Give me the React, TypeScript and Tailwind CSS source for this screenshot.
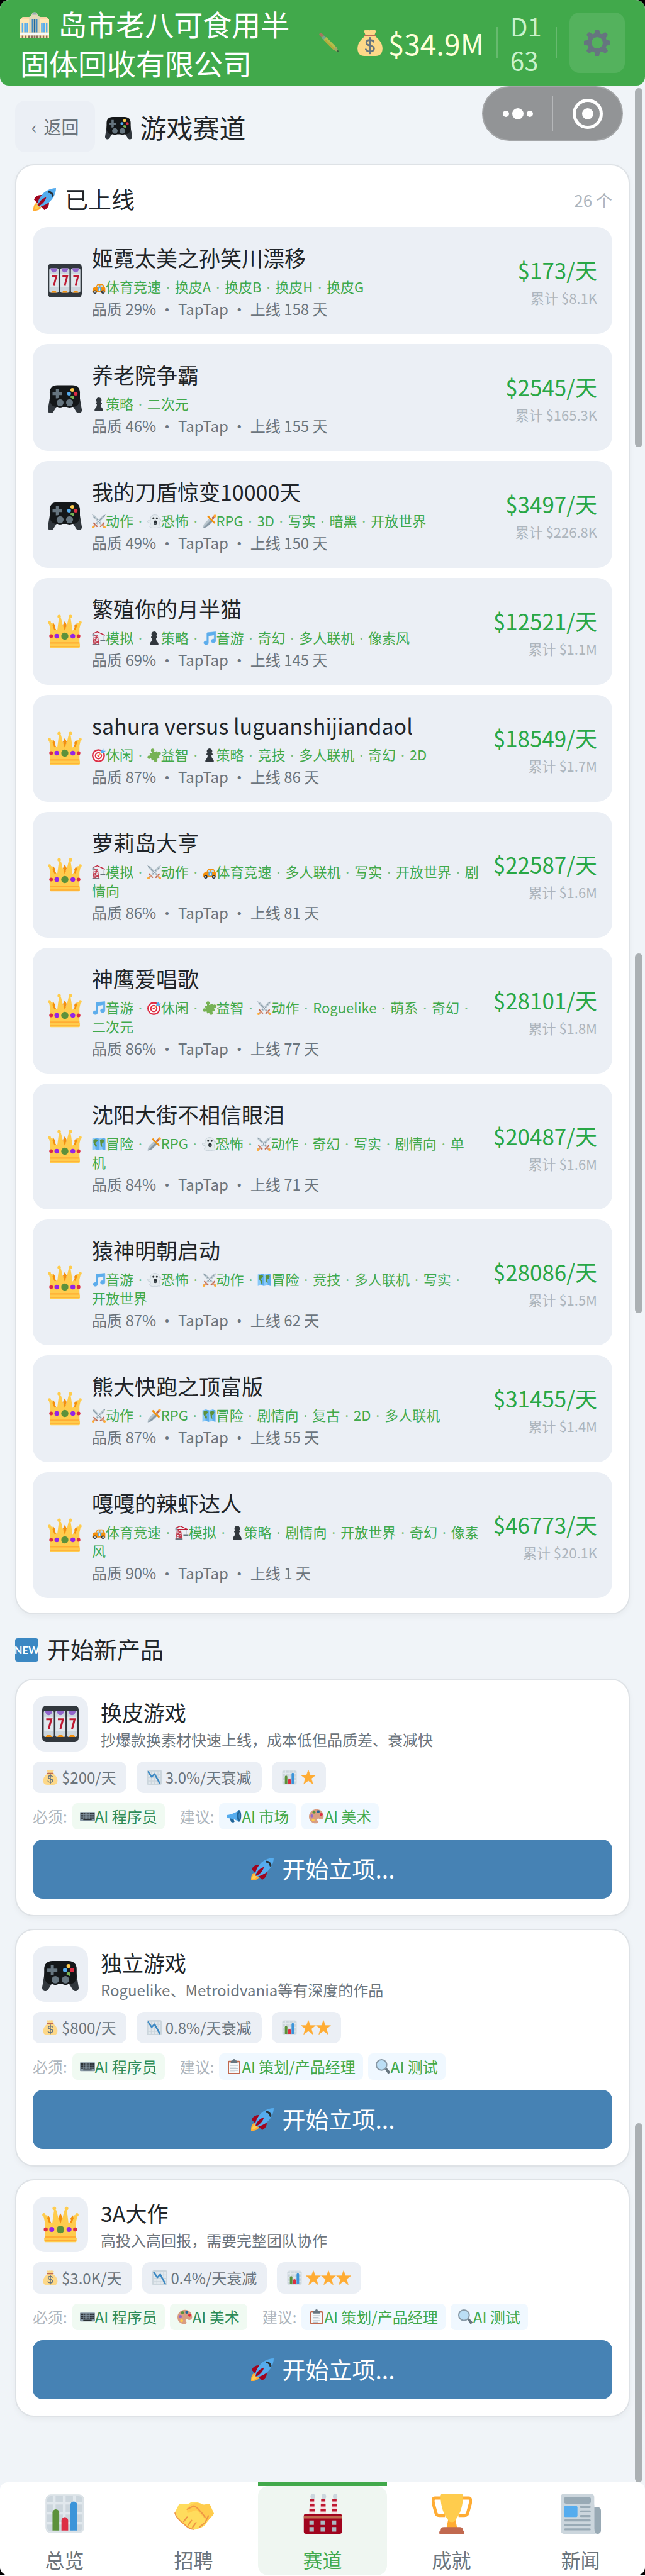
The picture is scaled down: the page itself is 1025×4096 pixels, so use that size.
import { Fragment } from 'react';
import type { ReactNode } from 'react';
import clsx from 'clsx';

/* ---------- icons ---------- */

const icons: Record<string, ReactNode> = {
  slot: (
    <>
      <rect width="36" height="36" rx="4" fill="#31373d" />
      <rect x="1.500" y="5" width="10" height="26" rx="2" fill="#ccd6dd" />
      <rect x="13" y="5" width="10" height="26" rx="2" fill="#ccd6dd" />
      <rect x="24.500" y="5" width="10" height="26" rx="2" fill="#ccd6dd" />
      <path d="M2 11h9v14H2zM13.500 11h9v14h-9zM25 11h9v14h-9z" fill="#e1e8ed" />
      <path d="M3 5h7c0 2.500-1.500 4.500-3.500 4.500S3 7.500 3 5zM14.500 5h7c0 2.500-1.500 4.500-3.500 4.500s-3.500-2-3.500-4.500zM26 5h7c0 2.500-1.500 4.500-3.500 4.500S26 7.500 26 5z" fill="#9266cc" />
      <path d="M3.500 31c.5-3 5.500-3 6 0zM15 31c.5-3 5.500-3 6 0zM26.500 31c.5-3 5.500-3 6 0z" fill="#f4900c" />
      <path d="M4 13.500h5L6.500 23M15.500 13.500h5L18 23M27 13.500h5L29.500 23" fill="none" stroke="#be1931" strokeWidth="1.900" />
    </>
  ),
  gamepad: (
    <>
      <path d="M3 13 0 31c-.3 4 4 5 6 2l5-8h14l5 8c2 3 6.300 2 6-2l-3-18z" fill="#31373d" />
      <path d="M10 5h16c5 0 8 3 8 8v7c0 5-3 8-8 8H10c-5 0-8-3-8-8v-7c0-5 3-8 8-8z" fill="#141719" />
      <path d="M8.500 9h3v3.500H15v3h-3.500V19h-3v-3.500H5v-3h3.500z" fill="#66757f" />
      <circle cx="26" cy="10" r="2" fill="#ffcc4d" />
      <circle cx="29.500" cy="14" r="2" fill="#dd2e44" />
      <circle cx="22.500" cy="14" r="2" fill="#55acee" />
      <circle cx="26" cy="18" r="2" fill="#77b255" />
      <circle cx="13" cy="23.500" r="5.200" fill="#141719" />
      <circle cx="23" cy="23.500" r="5.200" fill="#141719" />
      <circle cx="13" cy="23.500" r="3.700" fill="#66757f" />
      <circle cx="23" cy="23.500" r="3.700" fill="#66757f" />
    </>
  ),
  crown: (
    <>
      <path d="m3 22 2-12 5 8 3-12 5 10 5-10 3 12 5-8 2 12z" fill="#f4900c" />
      <path d="M2.500 32V15L1 8.500 5 9l2 7 3 1 1-8 1-6 2 1 2 8 2 5 2-5 2-8 2-1 1 6 1 8 3-1 2-7 4-.5-1.500 6.500v17z" fill="#ffcc4d" />
      <circle cx="12" cy="2.200" r="1.800" fill="#ffcc4d" />
      <circle cx="24" cy="2.200" r="1.800" fill="#ffcc4d" />
      <circle cx="1.700" cy="8.500" r="1.600" fill="#ffcc4d" />
      <circle cx="34.300" cy="8.500" r="1.600" fill="#ffcc4d" />
      <path d="m6 9 2 3-1 5-2-5zM18 7l2 4-2 6-2-6zM30 9l1 3-2 5-1-5z" fill="#f4900c" />
      <rect x="2" y="30.500" width="32" height="5" rx="1.300" fill="#ffcc4d" />
      <path d="M2.500 29.500h31v1.500h-31zM2.500 33.500h31v1h-31z" fill="#ffac33" />
      <circle cx="18" cy="23" r="3.800" fill="#5c913b" />
      <circle cx="9.500" cy="23" r="2.500" fill="#9224e6" />
      <circle cx="26.500" cy="23" r="2.500" fill="#9224e6" />
      <circle cx="3.500" cy="23" r="2" fill="#dd2e44" />
      <circle cx="32.500" cy="23" r="2" fill="#dd2e44" />
    </>
  ),
  rocket: (
    <>
      <path d="M1 35c-.5-5 1-11 5-12l7 7c-1 4-7 5.500-12 5z" fill="#ffac33" />
      <path d="M2.500 33.500C2.500 30 4 26 7 25.500l3 3c-1 3-4 5-7.500 5z" fill="#ffcc4d" />
      <path d="M2 18c2-5 7-8 13-7l-7 13zM18 34c5-2 8-7 7-13l-13 7z" fill="#a0041e" />
      <path d="M36 0c-9 0-18 5-23 12-3 4-5 9-6 14l3 3c5-1 10-3 14-6C31 18 36 9 36 0z" fill="#55acee" />
      <path d="M8 28c0-5 5-11 13-14-2 7-8 13-13 14z" fill="#a0041e" />
      <path d="M25 6c3 0 6 3 6 6" fill="none" stroke="#292f33" strokeWidth="3" strokeLinecap="round" />
    </>
  ),
  building: (
    <>
      <path d="M0 34V11l3-3h9l2 3v23zM22 34V11l2-3h9l3 3v23z" fill="#ffe8b6" />
      <path d="M0 11l3-3h9l2 3zM22 11l2-3h9l3 3z" fill="#ffd6a8" />
      <path d="M11 34V8l3-2a4 4 0 0 1 8 0l3 2v26z" fill="#e1d9b9" />
      <path d="M15 5a3 3 0 0 1 6 0z" fill="#99aab5" />
      <path d="M2 15h2v12H2zM5 15h2v12H5zM8 15h2v12H8zM26 15h2v12h-2zM29 15h2v12h-2zM32 15h2v12h-2z" fill="#55acee" />
      <path d="M14.500 11h2v16h-2zM19.500 11h2v16h-2z" fill="#3b88c3" />
      <path d="M17 11h2v16h-2z" fill="#226699" />
      <path d="M0 28h36v2H0z" fill="#f5f8fa" />
      <path d="M2 31h2v3H2zM6 31h2v3H6zM10 31h2v3h-2zM14 31h2v3h-2zM17 31h2v3h-2zM20 31h2v3h-2zM24 31h2v3h-2zM28 31h2v3h-2zM32 31h2v3h-2z" fill="#8a6a5c" />
    </>
  ),
  pencil: (
    <>
      <path d="M0 4c0-2 2-4 4-4l5 5-4 4z" fill="#ea596e" />
      <path d="m4 9 5-4 4 4-4 5z" fill="#99aab5" />
      <path d="m8 13 5-5 18 18-5 5z" fill="#ffcc4d" />
      <path d="m10 15 2-3 16 16-2 3z" fill="#ffac33" />
      <path d="m25 30 6-5 5 11z" fill="#e1a679" />
      <path d="m31 33 3-2 2 5z" fill="#292f33" />
    </>
  ),
  money: (
    <>
      <path d="M11 9C5 14 1 19 1 26c0 7 4 10 9 10h16c5 0 9-3 9-10 0-7-4-12-10-17z" fill="#fdd888" />
      <path d="M12 8 9.500 1.500C12 0 14 2 16 .5 18 2 20-.5 22 1c2-1 3 0 4.500.5L24 8z" fill="#fdd888" />
      <rect x="10" y="7" width="16" height="2.400" rx="1.200" fill="#bf6952" />
      <path d="M23 16.500c-1-1.700-3-2.200-5-2.200-3 0-5 1.400-5 3.700 0 5.500 10.500 2.300 10.500 8 0 2.400-2.200 4-5.500 4-2.600 0-4.700-.9-5.700-3M18 11.500v21" fill="none" stroke="#67757f" strokeWidth="2.300" strokeLinecap="round" />
    </>
  ),
  gear: (
    <>
      <path d="M16 0h4l1.500 6h-7zM16 36h4l1.500-6h-7zM0 16v4l6 1.500v-7zM36 16v4l-6 1.500v-7zM4 7l3-3 5.500 3.500-5 5zM32 7l-3-3-5.500 3.500 5 5zM4 29l3 3 5.500-3.500-5-5zM32 29l-3 3-5.500-3.500 5-5z" fill="#66757f" stroke="#66757f" strokeLinejoin="round" />
      <circle cx="18" cy="18" r="10.500" fill="none" stroke="#66757f" strokeWidth="5.500" />
    </>
  ),
  car: (
    <>
      <path d="M2 21c2-3 5-4 8-4l3-6c1-1 2-1.500 4-1.500h9c3 0 5 2 7 7l2 4v10H1z" fill="#f4900c" />
      <path d="m12 17 3-5h5v6zM22 12h4c2 0 3 2 4 5l-8 1z" fill="#bbdef5" />
      <rect x="15" y="17" width="10" height="11" rx="4" fill="#55acee" />
      <path d="M19 20h2v6h-2z" fill="#fff" />
      <circle cx="8" cy="30" r="4.500" fill="#292f33" />
      <circle cx="29" cy="30" r="4.500" fill="#292f33" />
      <circle cx="8" cy="30" r="2" fill="#ccd6dd" />
      <circle cx="29" cy="30" r="2" fill="#ccd6dd" />
    </>
  ),
  pawn: (
    <path d="M18 0a7 7 0 0 1 5 12l3 2v3h-3c0 5 1 8 4 11l2 4v4H7v-4l2-4c3-3 4-6 4-11h-3v-3l3-2a7 7 0 0 1 5-12z" fill="#31373d" />
  ),
  swords: (
    <>
      <path d="M1 1l6 1 19 20-4 4L3 7zM35 1l-6 1L10 22l4 4L33 7z" fill="#b8c5cd" />
      <path d="m1 1 23 23M35 1 12 24" stroke="#8899a6" strokeWidth="1.500" />
      <path d="m5 20 11 11-3 2L3 23zM31 20 20 31l3 2 10-10z" fill="#bf6952" />
      <path d="m9 25 3 3-7 7-4-4zM27 25l-3 3 7 7 4-4z" fill="#d99e82" />
      <circle cx="3" cy="33" r="3" fill="#ffac33" />
      <circle cx="33" cy="33" r="3" fill="#ffac33" />
    </>
  ),
  ghost: (
    <>
      <path d="M8 13C8 5 13 1 20 1s12 5 12 12c2-2 5-1 3.500 2L32 20c0 8 1 10 3 13-3 3-6 0-9 2-3 1-5-1-8 0-6 1-12-1-12-5 2-1 3-4 2-8-4 1-9-2-7-5 2-2 4 0 7-1z" fill="#e4eaee" stroke="#c3ced6" strokeWidth="1.500" />
      <circle cx="16" cy="10" r="2.600" fill="#292f33" />
      <circle cx="25" cy="10" r="2.600" fill="#292f33" />
      <ellipse cx="21" cy="21" rx="4.500" ry="5.500" fill="#292f33" />
      <path d="M18 23c2-2 5-2 6 0l-3 3z" fill="#66757f" />
    </>
  ),
  dagger: (
    <>
      <path d="M1 35c0-5 2-10 5-13L19 9l8 8-13 13c-3 3-8 5-13 5z" fill="#b8c5cd" />
      <path d="M1 35 23 13l4 4-13 13c-3 3-8 5-13 5z" fill="#8899a6" />
      <path d="m23 9 6-6 4 4-6 6z" fill="#bf6952" />
      <path d="m15 3 18 18-3 3L12 6z" fill="#f4900c" />
      <circle cx="32" cy="4" r="3.600" fill="#ffac33" />
    </>
  ),
  crane: (
    <>
      <path d="M6 10h9l3 24H3zM7 16h8M6 22h10M5 28h12M7 11l8 5-9 6 11 6-13 6" fill="none" stroke="#c03a4c" strokeWidth="2" />
      <path d="M2 6 14 1l20 9M4 9h30" fill="none" stroke="#be1931" strokeWidth="2" />
      <path d="M29 10v12" stroke="#66757f" strokeWidth="1.600" />
      <path d="M22 22h13v4H22zM1 33h19v3H1z" fill="#66757f" />
      <path d="M1 6h6v6H1z" fill="#8899a6" />
    </>
  ),
  music: (
    <path d="M34 1v24a6 5 0 1 1-4-5V9L15 12v18a6 5 0 1 1-4-5V5c0-1 1-2 2-2z" fill="#5dadec" stroke="#5dadec" />
  ),
  target: (
    <>
      <circle cx="17" cy="19" r="17" fill="#dd2e44" />
      <circle cx="17" cy="19" r="13" fill="#fff" />
      <circle cx="17" cy="19" r="9.500" fill="#dd2e44" />
      <circle cx="17" cy="19" r="6" fill="#fff" />
      <circle cx="17" cy="19" r="3" fill="#dd2e44" />
      <path d="M17 19 28 8" stroke="#ffac33" strokeWidth="2" />
      <path d="m23 13 1-7 6-5v5h6l-5 6z" fill="#55acee" />
    </>
  ),
  puzzle: (
    <>
      <path d="m6 13 20-6 6 18-20 7z" fill="#77b255" />
      <path d="M14 12V6M30 16h3M21 27v5M10 22H5" stroke="#77b255" strokeWidth="5" />
      <circle cx="14" cy="5" r="4.500" fill="#77b255" />
      <circle cx="31" cy="13" r="4.500" fill="#77b255" />
      <circle cx="22" cy="31" r="4.500" fill="#77b255" />
      <circle cx="5" cy="23" r="4.500" fill="#77b255" />
    </>
  ),
  map: (
    <>
      <path d="m1 4 8-2 9 2 9-2 8 2v30l-8-2-9 2-9-2-8 2z" fill="#88c9f9" />
      <path d="M9 2l9 2v30l-9-2zM27 2l8 2v30l-8-2z" fill="#5dadec" />
      <path d="M4 7c4-3 10-2 11 2 0 4-5 3-6 8l4 4-2 8-3-7-4-7zM21 8c4-4 9-2 11 0l-2 7-4 2 1 9-4-2-1-8z" fill="#5c913b" />
    </>
  ),
  new: (
    <>
      <rect width="36" height="36" rx="4" fill="#3b88c3" />
      <text x="18" y="24" textAnchor="middle" fontSize="16" fontWeight="700" fill="#fff" fontFamily="Lato, sans-serif">NEW</text>
    </>
  ),
  chartDown: (
    <>
      <rect width="36" height="36" rx="4" fill="#ccd6dd" />
      <path d="M4 4h6v6H4zM12 4h6v6h-6zM20 4h6v6h-6zM28 4h5v6h-5zM4 12h6v6H4zM12 12h6v6h-6zM20 12h6v6h-6zM28 12h5v6h-5zM4 20h6v6H4zM12 20h6v6h-6zM20 20h6v6h-6zM28 20h5v6h-5zM4 28h6v5H4zM12 28h6v5h-6zM20 28h6v5h-6zM28 28h5v5h-5z" fill="#e1e8ed" />
      <path d="m4 5 8 12 7-7 12 22" fill="none" stroke="#3b88c3" strokeWidth="3.600" strokeLinecap="round" strokeLinejoin="round" />
    </>
  ),
  chart: (
    <>
      <rect x="1" y="1" width="34" height="34" rx="4" fill="#ccd6dd" />
      <path d="M1 8.500h34M1 17.500h34M1 26.500h34M8.500 1v34M17.500 1v34M26.500 1v34" stroke="#e1e8ed" strokeWidth="2.500" />
      <rect x="1.500" y="1.500" width="33" height="33" rx="4" fill="none" stroke="#dce3e8" strokeWidth="1.500" />
      <path d="M7 33V17a3 3 0 0 1 6 0v16z" fill="#5c913b" />
      <path d="M15 33v-9a3 3 0 0 1 6 0v9z" fill="#dd2e44" />
      <path d="M23 33V10a3 3 0 0 1 6 0v23z" fill="#3b94d9" />
    </>
  ),
  star: (
    <path d="m18 1 4.500 12H35l-10 8 4 13-11-8-11 8 4-13L1 13h12.500z" fill="#ffac33" stroke="#ffac33" strokeLinejoin="round" />
  ),
  keyboard: (
    <>
      <rect y="8" width="36" height="21" rx="2" fill="#8899a6" />
      <path d="M2 12h32M2 17h32M2 22h32" stroke="#292f33" strokeWidth="3.500" strokeDasharray="2.600 1" />
      <path d="M8 26h20" stroke="#292f33" strokeWidth="2.500" />
    </>
  ),
  megaphone: (
    <>
      <path d="M8 22h8l3 9c-3 3-8 2-9-1z" fill="#226699" />
      <path d="M1 15c4 0 20-4 29-12v28C22 25 5 22 1 22c-1-2-1-5 0-7z" fill="#55acee" />
      <ellipse cx="30" cy="17" rx="5" ry="14" fill="#226699" />
      <ellipse cx="31" cy="17" rx="2" ry="7" fill="#3b88c3" />
    </>
  ),
  palette: (
    <>
      <path d="M18 1C8 1 0 9 0 19c0 9 7 16 16 16 6 0 7-4 4-7-2-3 1-6 4-4 5 3 11 1 11-6C35 9 28 1 18 1z" fill="#d99e82" />
      <circle cx="12" cy="8" r="3.500" fill="#5c913b" />
      <circle cx="22" cy="7" r="3.500" fill="#226699" />
      <circle cx="29" cy="14" r="3.500" fill="#dd2e44" />
      <circle cx="7" cy="17" r="3.500" fill="#9268ca" />
      <circle cx="10" cy="27" r="3.500" fill="#ffcc4d" />
    </>
  ),
  clipboard: (
    <>
      <rect x="3" y="4" width="30" height="32" rx="3" fill="#c1694f" />
      <path d="M6 8h24v25H6z" fill="#f5f8fa" />
      <path d="M10 7c0-3 3-4 5-4a3 3 0 0 1 6 0c2 0 5 1 5 4v3H10z" fill="#66757f" />
      <path d="M9 15h18M9 19h14M9 23h18M9 27h18M9 30.500h12" stroke="#aab8c2" strokeWidth="1.600" />
    </>
  ),
  magnifier: (
    <>
      <path d="m21 23 4-3 10 11-5 5z" fill="#66757f" />
      <circle cx="14" cy="14" r="12.500" fill="#bbdef5" stroke="#8899a6" strokeWidth="3" />
    </>
  ),
  handshake: (
    <>
      <path d="M1 17 5 9c4 0 8 1 10-1 5-1 8 0 12 2 2 0 3-1 5-1l4 9c-2 3-5 5-7 9-2 3-6 4-9 5-3 1-6-1-8-3-4-2-8-6-9-9z" fill="#ffdc5d" />
      <path d="M12 13c4-5 9-6 14-3 2 0 4-1 6-1l4 9-6 7-9-10c-3-1-6 3-9 2z" fill="#ffcc4d" />
      <path d="m12 14 6-3c3 1 7 6 10 10M9 25l3-4M13 28l3-4M17 30l3-4M31 20l-3 6-5 4" fill="none" stroke="#ef9645" strokeWidth="1.200" strokeLinecap="round" />
      <path d="M1 17c1 4 4 7 8 10 3 3 6 5 9 5" fill="none" stroke="#ef9645" strokeWidth="1" />
    </>
  ),
  factory: (
    <>
      <path d="m5.500 19 1-14h3.500l1 14zM15.500 19l1-14H20l1 14zM25.500 19l1-14H30l1 14z" fill="#f5dfe2" />
      <path d="M6.500 5h3.800v2H6.500zM6.200 9.500h4.300v2H6.200zM6 14h4.700v2H6zM16.500 5h3.800v2h-3.800zM16.200 9.500h4.300v2h-4.300zM16 14h4.700v2H16zM26.500 5h3.800v2h-3.800zM26.200 9.500h4.300v2h-4.300zM26 14h4.700v2H26z" fill="#be1931" />
      <ellipse cx="9" cy="2.500" rx="2" ry="2.400" fill="#ccd6dd" />
      <ellipse cx="19" cy="2.500" rx="2" ry="2.400" fill="#ccd6dd" />
      <ellipse cx="29" cy="2.500" rx="2" ry="2.400" fill="#ccd6dd" />
      <rect x="1" y="18" width="34" height="18" rx="2" fill="#a0041e" />
      <path d="M1 20h34v2.200H1z" fill="#c1694f" />
      <path d="M6 24h4v4H6zM16 24h4v4h-4zM26 24h4v4h-4zM6 30h4v4H6zM16 30h4v4h-4zM26 30h4v4h-4z" fill="#aab8c2" />
    </>
  ),
  trophy: (
    <>
      <path d="M10 4H3C1 4 1 6 1.500 9L4 18c.6 2 4 1.500 8 1.500M26 4h7c2 0 2 2 1.500 5L32 18c-.6 2-4 1.500-8 1.500" fill="none" stroke="#ffac33" strokeWidth="2.800" />
      <path d="M15 22h6l2 10H13z" fill="#ffac33" />
      <path d="M8 2c0-2 2-2 4-2h12c2 0 4 0 4 2 0 12-4 18-7 22-1 2-5 2-6 0-3-4-7-10-7-22z" fill="#ffcc4d" />
      <path d="M11 30h14c2 0 3 1 3 3 1 0 1.500 1.500 1 3H7c-.5-1.500 0-3 1-3 0-2 1-3 3-3z" fill="#c1694f" />
    </>
  ),
  newspaper: (
    <>
      <path d="M28 12h5a3 3 0 0 1 3 3v18a3 3 0 0 1-6 0z" fill="#99aab5" />
      <rect width="30" height="36" rx="3" fill="#ccd6dd" />
      <path d="M30 10v23c0 2 1 3 3 3H26V8z" fill="#ccd6dd" />
      <rect x="3" y="3" width="24" height="6" rx="2" fill="#99aab5" />
      <rect x="3" y="11" width="12" height="10" rx="1.500" fill="#55acee" />
      <path d="M18 12h8M18 16h8M18 20h8M4 24h22M4 28h22M4 32h22" stroke="#99aab5" strokeWidth="1.800" strokeLinecap="round" />
    </>
  ),
};

function Icon({ name, className }: { name: string; className?: string }) {
  return (
    <svg viewBox="0 0 36 36" aria-hidden="true" className={clsx('shrink-0', className)}>
      {icons[name]}
    </svg>
  );
}

/* ---------- data ---------- */

// 'icon:label' or just 'label', \n starts a new line
const T = {
  sport: 'car:体育竞速',
  strategy: 'pawn:策略',
  action: 'swords:动作',
  horror: 'ghost:恐怖',
  rpg: 'dagger:RPG',
  sim: 'crane:模拟',
  music: 'music:音游',
  casual: 'target:休闲',
  puzzle: 'puzzle:益智',
  adventure: 'map:冒险',
};

type Game = {
  icon: string;
  name: string;
  tags: string[];
  quality: number;
  days: number;
  income: string;
  total: string;
};

const games: Game[] = [
  { icon: 'slot', name: '姬霓太美之孙笑川漂移', tags: [T.sport, '换皮A', '换皮B', '换皮H', '换皮G'], quality: 29, days: 158, income: '$173', total: '$8.1K' },
  { icon: 'gamepad', name: '养老院争霸', tags: [T.strategy, '二次元'], quality: 46, days: 155, income: '$2545', total: '$165.3K' },
  { icon: 'gamepad', name: '我的刀盾惊变10000天', tags: [T.action, T.horror, T.rpg, '3D', '写实', '暗黑', '开放世界'], quality: 49, days: 150, income: '$3497', total: '$226.8K' },
  { icon: 'crown', name: '繁殖你的月半猫', tags: [T.sim, T.strategy, T.music, '奇幻', '多人联机', '像素风'], quality: 69, days: 145, income: '$12521', total: '$1.1M' },
  { icon: 'crown', name: 'sahura versus luguanshijiandaol', tags: [T.casual, T.puzzle, T.strategy, '竞技', '多人联机', '奇幻', '2D'], quality: 87, days: 86, income: '$18549', total: '$1.7M' },
  { icon: 'crown', name: '萝莉岛大亨', tags: [T.sim, T.action, T.sport, '多人联机', '写实', '开放世界', '剧\n情向'], quality: 86, days: 81, income: '$22587', total: '$1.6M' },
  { icon: 'crown', name: '神鹰爱唱歌', tags: [T.music, T.casual, T.puzzle, T.action, 'Roguelike', '萌系', '奇幻', '\n二次元'], quality: 86, days: 77, income: '$28101', total: '$1.8M' },
  { icon: 'crown', name: '沈阳大街不相信眼泪', tags: [T.adventure, T.rpg, T.horror, T.action, '奇幻', '写实', '剧情向', '单\n机'], quality: 84, days: 71, income: '$20487', total: '$1.6M' },
  { icon: 'crown', name: '猿神明朝启动', tags: [T.music, T.horror, T.action, T.adventure, '竞技', '多人联机', '写实', '\n开放世界'], quality: 87, days: 62, income: '$28086', total: '$1.5M' },
  { icon: 'crown', name: '熊大快跑之顶富版', tags: [T.action, T.rpg, T.adventure, '剧情向', '复古', '2D', '多人联机'], quality: 87, days: 55, income: '$31455', total: '$1.4M' },
  { icon: 'crown', name: '嘎嘎的辣虾达人', tags: [T.sport, T.sim, T.strategy, '剧情向', '开放世界', '奇幻', '像素\n风'], quality: 90, days: 1, income: '$46773', total: '$20.1K' },
];

const products = [
  {
    icon: 'slot',
    name: '换皮游戏',
    desc: '抄爆款换素材快速上线，成本低但品质差、衰减快',
    cost: '$200/天',
    decay: '3.0%/天衰减',
    stars: 1,
    required: ['keyboard:AI 程序员'],
    suggested: ['megaphone:AI 市场', 'palette:AI 美术'],
  },
  {
    icon: 'gamepad',
    name: '独立游戏',
    desc: 'Roguelike、Metroidvania等有深度的作品',
    cost: '$800/天',
    decay: '0.8%/天衰减',
    stars: 2,
    required: ['keyboard:AI 程序员'],
    suggested: ['clipboard:AI 策划/产品经理', 'magnifier:AI 测试'],
  },
  {
    icon: 'crown',
    name: '3A大作',
    desc: '高投入高回报，需要完整团队协作',
    cost: '$3.0K/天',
    decay: '0.4%/天衰减',
    stars: 3,
    required: ['keyboard:AI 程序员', 'palette:AI 美术'],
    suggested: ['clipboard:AI 策划/产品经理', 'magnifier:AI 测试'],
  },
];

const tabs = [
  { icon: 'chart', label: '总览' },
  { icon: 'handshake', label: '招聘' },
  { icon: 'factory', label: '赛道', active: true },
  { icon: 'trophy', label: '成就' },
  { icon: 'newspaper', label: '新闻' },
];

/* ---------- components ---------- */

function TopBar() {
  return (
    <header className="flex h-[136px] items-center rounded-[14px] bg-[#41a94b] px-8 text-white">
      <h1 className="w-[464px] text-[46px] leading-[62px]">
        <Icon name="building" className="mr-1 inline-block size-[46px] align-[-6px]" /> 岛市老八可食用半固体回收有限公司
      </h1>
      <button type="button" aria-label="修改名称" className="ml-[11px] opacity-60">
        <Icon name="pencil" className="size-8" />
      </button>
      <div className="ml-auto flex items-center">
        <Icon name="money" className="size-[42px]" />
        <span className="ml-2 text-[46px] leading-[62px] text-[#fdffd9]">$34.9M</span>
        <span className="ml-5 h-[50px] w-[2px] bg-white/20" />
        <span className="mx-5 w-[52px] text-[40px] leading-[54px] break-all text-[#c9f2cb]">D163</span>
        <span className="h-[50px] w-[2px] bg-white/20" />
        <button type="button" aria-label="设置" className="ml-5 flex h-24 w-[88px] items-center justify-center rounded-2xl bg-white/10">
          <Icon name="gear" className="size-[42px]" />
        </button>
      </div>
    </header>
  );
}

// floating host menu, lies over the page
function Capsule() {
  return (
    <div className="absolute top-[137px] right-[35px] flex h-[87px] w-56 items-center rounded-full border-2 border-[#a4a6a8] bg-[#929496]">
      <button type="button" aria-label="更多" className="flex flex-1 items-center justify-center gap-[5px]">
        <span className="size-[10px] rounded-full bg-white" />
        <span className="size-[18px] rounded-full bg-white" />
        <span className="size-[10px] rounded-full bg-white" />
      </button>
      <span className="h-14 w-[2px] bg-[#b5b7b9]" />
      <button type="button" aria-label="关闭" className="flex flex-1 items-center justify-center">
        <span className="flex size-12 items-center justify-center rounded-full border-[5px] border-white">
          <span className="size-[18px] rounded-full bg-white" />
        </span>
      </button>
    </div>
  );
}

function Tags({ tags }: { tags: string[] }) {
  return (
    <p className="text-[22px] leading-[30px] whitespace-pre-line text-[#41a94b]">
      {tags.map((tag, i) => {
        const [label, icon] = tag.split(':').reverse();
        return (
          <Fragment key={tag}>
            {i > 0 && <> <span className="mx-[3px] font-['Noto_Sans'] leading-none opacity-70">·</span> </>}
            {icon && <Icon name={icon} className="inline-block size-[22px] align-[-3px]" />}
            {label}
          </Fragment>
        );
      })}
    </p>
  );
}

function GameRow({ game }: { game: Game }) {
  return (
    <li className="flex items-center gap-4 rounded-3xl bg-[#ebeff5] px-6 py-[22px]">
      <Icon name={game.icon} className="size-[54px]" />
      <div className="flex min-w-0 flex-1 flex-col gap-[3px]">
        <h3 className="text-[34px] leading-[54px] text-[#212529]">{game.name}</h3>
        <Tags tags={game.tags} />
        <p className="text-[24px] leading-9 text-[#6c757d]">
          品质 {game.quality}% · TapTap · 上线 {game.days} 天
        </p>
      </div>
      <div className="flex shrink-0 flex-col gap-[3px] text-right">
        <span className="text-[35px] leading-[50px] text-[#28a745]">{game.income}/天</span>
        <span className="text-[22px] leading-8 text-[#adb5bd]">累计 {game.total}</span>
      </div>
    </li>
  );
}

function Chip({ children }: { children: ReactNode }) {
  return <span className="flex h-[50px] items-center gap-[6px] rounded-xl bg-[#ebeff5] px-4">{children}</span>;
}

function Roles({ title, roles, className }: { title: string; roles: string[]; className: string }) {
  return (
    <div className="flex items-center gap-2">
      <span className="text-[#adb5bd]">{title}:</span>
      {roles.map((role) => {
        const [label, icon] = role.split(':').reverse();
        return (
          <span key={role} className={clsx('flex h-[42px] items-center rounded-lg px-3', className)}>
            <Icon name={icon} className="size-6" />
            {label}
          </span>
        );
      })}
    </div>
  );
}

function ProductCard({ product }: { product: (typeof products)[number] }) {
  return (
    <section className="rounded-[30px] border-2 border-[#dee2e6] bg-white p-[26px] text-[24px] shadow-[0_4px_10px_rgba(0,0,0,0.04)]">
      <div className="flex items-center gap-5">
        <div className="flex size-[88px] items-center justify-center rounded-[20px] bg-[#ebeff5]">
          <Icon name={product.icon} className="size-[58px]" />
        </div>
        <div>
          <h3 className="text-[34px] leading-[50px] text-[#212529]">{product.name}</h3>
          <p className="leading-9 text-[#6c757d]">{product.desc}</p>
        </div>
      </div>
      <div className="mt-4 flex gap-4 text-[#6c757d]">
        <Chip>
          <Icon name="money" className="size-6" />
          {product.cost}
        </Chip>
        <Chip>
          <Icon name="chartDown" className="size-6" />
          {product.decay}
        </Chip>
        <Chip>
          <Icon name="chart" className="size-6" />
          <span className="flex">
            {Array.from({ length: product.stars }, (_, i) => (
              <Icon key={i} name="star" className="size-6" />
            ))}
          </span>
        </Chip>
      </div>
      <div className="mt-4 flex gap-6">
        <Roles title="必须" roles={product.required} className="bg-[#f0faf2] text-[#2e8b57]" />
        <Roles title="建议" roles={product.suggested} className="bg-[#f0f8ff] text-[#41a94b]" />
      </div>
      <button
        type="button"
        className="mt-4 flex h-[94px] w-full items-center justify-center gap-[14px] rounded-2xl bg-[#4682b4] text-[37px] text-white"
      >
        <Icon name="rocket" className="size-[37px]" />
        开始立项...
      </button>
    </section>
  );
}

export default function App() {
  return (
    <div className="bg-black font-['Noto_Sans_CJK_SC',sans-serif]">
      <div className="relative overflow-hidden rounded-[14px] bg-[#f0f4f8]">
        <TopBar />
        <Capsule />

        <main className="px-6 pb-[104px]">
          <div className="flex items-center gap-4 pt-6">
            <button type="button" className="flex h-[82px] items-center gap-[11px] rounded-2xl bg-[#ebeff5] px-[26px] text-[28px] text-[#6c757d]">
              <span>‹</span>
              <span>返回</span>
            </button>
            <h2 className="flex items-center gap-3 text-[42px] text-[#212529]">
              <Icon name="gamepad" className="size-[43px]" />
              游戏赛道
            </h2>
          </div>

          <section className="mt-[19px] rounded-[30px] border-2 border-[#dee2e6] bg-white px-[26px] pt-[26px] pb-6 shadow-[0_4px_10px_rgba(0,0,0,0.04)]">
            <div className="mb-4 flex h-14 items-center justify-between">
              <h2 className="flex items-center gap-[14px] text-[37px] text-[#212529]">
                <Icon name="rocket" className="size-[37px]" />
                已上线
              </h2>
              <span className="text-[26px] text-[#adb5bd]">26 个</span>
            </div>
            <ul className="flex flex-col gap-4">
              {games.map((game) => (
                <GameRow key={game.name} game={game} />
              ))}
            </ul>
          </section>

          <h2 className="mt-7 mb-[18px] flex h-14 items-center gap-[14px] text-[37px] text-[#212529]">
            <Icon name="new" className="size-[37px]" />
            开始新产品
          </h2>
          <div className="flex flex-col gap-5">
            {products.map((product) => (
              <ProductCard key={product.name} product={product} />
            ))}
          </div>
        </main>

        <nav className="flex h-[148px] rounded-t-xl bg-white">
          {tabs.map((tab) => (
            <a
              key={tab.label}
              href="#"
              className={clsx(
                'flex flex-1 flex-col items-center border-t-[6px] text-[31px]',
                tab.active ? 'border-[#41a94b] text-[#41a94b]' : 'border-transparent text-[#6c757d]',
              )}
            >
              <span className={clsx('flex w-full flex-1 flex-col items-center gap-4 rounded-2xl pt-3', tab.active && 'bg-[#eff6f1]')}>
                <Icon name={tab.icon} className="size-16" />
                <span className="leading-[50px]">{tab.label}</span>
              </span>
            </a>
          ))}
        </nav>

        {/* scroll thumbs, lie over the right edge */}
        <div className="absolute top-[140px] right-1 h-[571px] w-3 rounded-full bg-[#abb0b3]" />
        <div className="absolute top-[1516px] right-1 h-[572px] w-3 rounded-full bg-[#abb0b3]" />
        <div className="absolute top-[3376px] right-1 h-[571px] w-3 rounded-full bg-[#abb0b3]" />
      </div>
    </div>
  );
}
